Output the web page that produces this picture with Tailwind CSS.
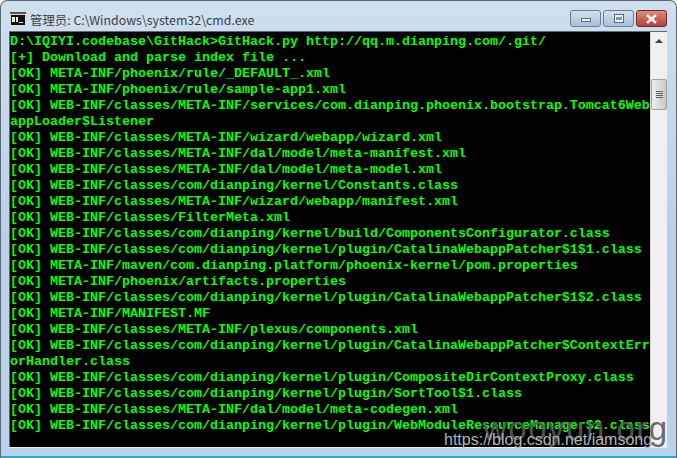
<!DOCTYPE html>
<html lang="zh">
<head>
  <meta charset="UTF-8">
  <title>cmd.exe</title>
  <script src="https://cdn.jsdelivr.net/npm/@tailwindcss/browser@4"></script>
</head>
<body class="w-[677px] h-[458px] overflow-hidden bg-white">
  <div class="relative w-[677px] h-[458px] flex flex-col overflow-hidden rounded-t-[7px] border border-b-0 border-[#5d6a75] bg-gradient-to-b from-[#cfe0ee] via-[#b9d1e8] to-[#b8d2ea]">
    <!-- title bar -->
    <div class="h-[30px] flex items-center shrink-0 pl-[9px] pr-[9px]">
      <svg width="16" height="14" viewBox="0 0 16 14" class="shrink-0 mt-[6px]">
        <rect x="0" y="0" width="16" height="14" fill="#d8d8d8"/>
        <rect x="0" y="0" width="16" height="2" fill="#555"/>
        <rect x="1" y="3" width="14" height="10" fill="#111"/>
        <rect x="2" y="5" width="3" height="5" fill="#eee"/>
        <rect x="6" y="5" width="2" height="5" fill="#eee"/>
        <rect x="9" y="10" width="4" height="1" fill="#eee"/>
      </svg>
      <span class="ml-[4px] mt-[7px] text-[12.4px] leading-[16px] text-[#3a3f44] whitespace-nowrap font-['Noto_Sans_CJK_SC','Open_Sans',sans-serif]">管理员: C:\Windows\system32\cmd.exe</span>
      <div class="ml-auto flex items-start gap-[2px] self-start mt-[9px]">
        <div class="w-[31px] h-[17px] rounded-[3px] border border-[#6b7f95] bg-gradient-to-b from-[#d5e2ef] to-[#a7bfd8] flex items-center justify-center">
          <div class="w-[10px] h-[4px] mt-[2px] bg-[#f3f5f8] border border-[#58677a]"></div>
        </div>
        <div class="w-[31px] h-[17px] rounded-[3px] border border-[#6b7f95] bg-gradient-to-b from-[#d5e2ef] to-[#a7bfd8] flex items-center justify-center">
          <div class="w-[10px] h-[9px] bg-[#f3f5f8] border border-[#58677a] flex items-center justify-center"><div class="w-[6px] h-[3px] bg-[#7f93a8]"></div></div>
        </div>
        <div class="w-[31px] h-[17px] rounded-[3px] border border-[#6d2a2e] bg-gradient-to-b from-[#dd8a80] to-[#b2403a] flex items-center justify-center">
          <svg width="13" height="10" viewBox="0 0 13 10"><path d="M2 1 L11 9 M11 1 L2 9" stroke="#f4f0ee" stroke-width="2.6"/></svg>
        </div>
      </div>
    </div>
    <!-- console + scrollbar -->
    <div class="flex ml-[8px] mr-[9px] h-[416px] shrink-0 border-l border-t border-[#5f6a74]">
      <pre class="w-[640px] shrink-0 h-full overflow-hidden bg-black pt-[2px] text-[#00ff00] font-bold text-[13.33px] leading-[16px] font-['Liberation_Mono',monospace]">D:\IQIYI.codebase\GitHack&gt;GitHack.py http://qq.m.dianping.com/.git/
[+] Download and parse index file ...
[OK] META-INF/phoenix/rule/_DEFAULT_.xml
[OK] META-INF/phoenix/rule/sample-app1.xml
[OK] WEB-INF/classes/META-INF/services/com.dianping.phoenix.bootstrap.Tomcat6Web
appLoader$Listener
[OK] WEB-INF/classes/META-INF/wizard/webapp/wizard.xml
[OK] WEB-INF/classes/META-INF/dal/model/meta-manifest.xml
[OK] WEB-INF/classes/META-INF/dal/model/meta-model.xml
[OK] WEB-INF/classes/com/dianping/kernel/Constants.class
[OK] WEB-INF/classes/META-INF/wizard/webapp/manifest.xml
[OK] WEB-INF/classes/FilterMeta.xml
[OK] WEB-INF/classes/com/dianping/kernel/build/ComponentsConfigurator.class
[OK] WEB-INF/classes/com/dianping/kernel/plugin/CatalinaWebappPatcher$1$1.class
[OK] META-INF/maven/com.dianping.platform/phoenix-kernel/pom.properties
[OK] META-INF/phoenix/artifacts.properties
[OK] WEB-INF/classes/com/dianping/kernel/plugin/CatalinaWebappPatcher$1$2.class
[OK] META-INF/MANIFEST.MF
[OK] WEB-INF/classes/META-INF/plexus/components.xml
[OK] WEB-INF/classes/com/dianping/kernel/plugin/CatalinaWebappPatcher$ContextErr
orHandler.class
[OK] WEB-INF/classes/com/dianping/kernel/plugin/CompositeDirContextProxy.class
[OK] WEB-INF/classes/com/dianping/kernel/plugin/SortTool$1.class
[OK] WEB-INF/classes/META-INF/dal/model/meta-codegen.xml
[OK] WEB-INF/classes/com/dianping/kernel/plugin/WebModuleResourceManager$2.class</pre>
      <!-- scrollbar -->
      <div class="relative flex-1 h-full bg-[#f0f0f0] border-l border-[#d8d8d8]">
        <div class="absolute left-[4px] top-[7px] w-0 h-0 border-x-[4px] border-x-transparent border-b-[4px] border-b-[#404040]"></div>
        <div class="absolute left-[0px] top-[47px] w-[16px] h-[31px] rounded-[2px] border border-[#a0a0a0] bg-gradient-to-r from-[#f0f0f0] to-[#c8c8c8] flex flex-col items-center justify-center gap-[1px]">
          <div class="w-[7px] h-[1px] bg-[#606060]"></div>
          <div class="w-[7px] h-[1px] bg-[#606060]"></div>
          <div class="w-[7px] h-[1px] bg-[#606060]"></div>
          <div class="w-[7px] h-[1px] bg-[#606060]"></div>
        </div>
      </div>
    </div>
    <div class="h-[1px] mx-[8px] bg-[#e8eef4] shrink-0"></div>
    <div class="flex-1"></div>
    <div class="h-[2px] bg-[#1eb0c8] shrink-0"></div>
    <!-- watermarks -->
    <div class="absolute left-[482px] top-[409px] text-[33px] leading-[38px] tracking-[1.5px] text-[#5a5a5a]/90 font-['Liberation_Sans',sans-serif] whitespace-nowrap">wooyun.org</div>
    <div class="absolute left-[443px] top-[428px] text-[16px] leading-[22px] text-[#b4b4b4] font-['Liberation_Sans',sans-serif] whitespace-nowrap">https://blog.csdn.net/iamsong</div>
  </div>
</body>
</html>
